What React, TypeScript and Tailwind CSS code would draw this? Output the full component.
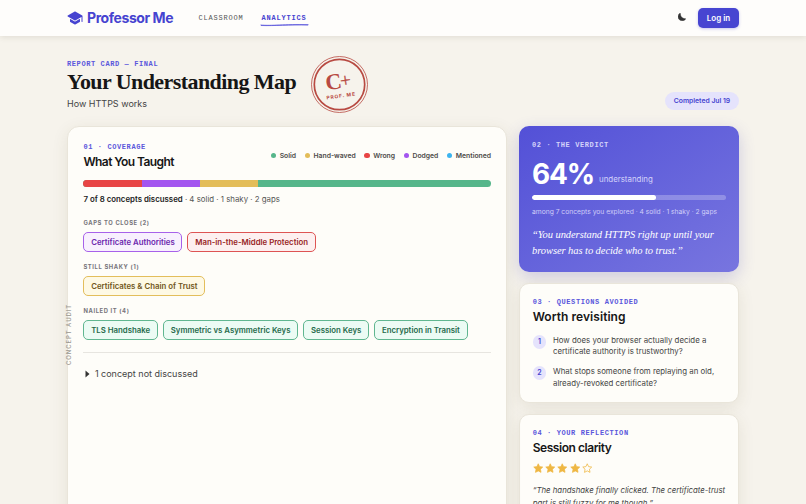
import type { ReactNode } from 'react'
import { IoSchool } from 'react-icons/io5'

const LEGEND = [
  { label: 'Solid', dot: 'bg-[#56b68b]' },
  { label: 'Hand-waved', dot: 'bg-[#e3bd59]' },
  { label: 'Wrong', dot: 'bg-[#e84545]' },
  { label: 'Dodged', dot: 'bg-[#a355ef]' },
  { label: 'Mentioned', dot: 'bg-[#3db4ef]' },
]

const GROUPS = [
  {
    title: 'GAPS TO CLOSE (2)',
    chips: [
      { label: 'Certificate Authorities', tone: 'border-[#a761ea] bg-[#f8f0fe] text-[#6b26ad]' },
      { label: 'Man-in-the-Middle Protection', tone: 'border-[#de5454] bg-[#fdf0f0] text-[#981f25]' },
    ],
  },
  {
    title: 'STILL SHAKY (1)',
    chips: [{ label: 'Certificates & Chain of Trust', tone: 'border-[#e3be5c] bg-[#fef9e5] text-[#71571b]' }],
  },
  {
    title: 'NAILED IT (4)',
    chips: [
      { label: 'TLS Handshake', tone: 'border-[#60b690] bg-[#ecfbf4] text-[#256a4b]' },
      { label: 'Symmetric vs Asymmetric Keys', tone: 'border-[#60b690] bg-[#ecfbf4] text-[#256a4b]' },
      { label: 'Session Keys', tone: 'border-[#60b690] bg-[#ecfbf4] text-[#256a4b]' },
      { label: 'Encryption in Transit', tone: 'border-[#60b690] bg-[#ecfbf4] text-[#256a4b]' },
    ],
  },
]

const QUESTIONS = [
  ['How does your browser actually decide a', 'certificate authority is trustworthy?'],
  ['What stops someone from replaying an old,', 'already-revoked certificate?'],
]

const STAR = 'M12 1.8l3.1 6.5 7.1 1-5.2 5 1.3 7.1L12 18l-6.3 3.4L7 14.3l-5.2-5 7.1-1z'

function Eyebrow({ children }: { children: ReactNode }) {
  return (
    <p className="h-[10px] font-['Liberation_Mono'] text-[7px] leading-[10px] font-bold tracking-[0.6px] whitespace-pre text-[#5a57dc]">
      {children}
    </p>
  )
}

function CardTitle({ children, tracking }: { children: ReactNode; tracking: string }) {
  return (
    <h2 className={`h-[18px] text-[12px] leading-[19px] font-semibold whitespace-nowrap text-[#161616] ${tracking}`}>
      {children}
    </h2>
  )
}

function Header() {
  return (
    <header className="relative z-10 h-[35.5px] bg-[#fefdfb] shadow-[0_1px_6px_rgba(70,60,30,0.13)]">
      <div className="mx-auto flex h-[35px] w-[672px] items-center">
        <IoSchool className="mr-[4px] size-[16px] text-[#4643d0]" />
        <span className="w-[111.5px] text-[14px] leading-[18px] font-bold tracking-[-0.43px] whitespace-nowrap text-[#4643d0]">
          Professor Me
        </span>
        <nav className="flex font-['Liberation_Mono'] text-[7px] leading-[10px] tracking-[0.8px]">
          <span className="w-[63px] text-[#555]">CLASSROOM</span>
          <span className="relative font-bold text-[#4643d0]">
            ANALYTICS
            <svg className="absolute top-[10px] left-[-2px]" width="49" height="4" viewBox="0 0 49 4" fill="none">
              <path d="M.5 2C12 3.1 24 1 48.5 1.7M1 2.5C14 3 30 1.6 48 2" stroke="#5a57dc" strokeWidth=".8" />
            </svg>
          </span>
        </nav>
        <svg className="mr-[12px] mb-[2px] ml-auto" width="8" height="8" viewBox="0 0 24 24" fill="#333">
          <path d="M5 1A12.5 12.5 0 1 0 23.5 17C15 18 6.500 11 7.500 1.500Z" stroke="#333" strokeWidth="1.2" />
        </svg>
        <button className="h-[20px] w-[41px] rounded-[5px] bg-[#4745d1] text-[8px] leading-[20px] font-semibold text-white shadow-[0_1px_3px_rgba(70,67,208,0.3)]">
          Log in
        </button>
      </div>
    </header>
  )
}

function GradeStamp() {
  return (
    <svg className="-mt-[1px] ml-[15px]" width="57" height="57" viewBox="0 0 57 57" fill="none">
      <circle cx="28.5" cy="28.5" r="28" stroke="#b84a42" strokeWidth=".8" />
      <circle cx="28.5" cy="28.5" r="25.2" stroke="#b84a42" strokeWidth="1.7" />
      <g transform="rotate(-8 28.5 28.5)" fill="#b84a42" textAnchor="middle">
        <text x="23" y="32.5" fontFamily="Liberation Serif" fontSize="22.5" fontWeight="700">
          C
        </text>
        <text x="35" y="31.5" fontFamily="Liberation Serif" fontSize="19" stroke="#b84a42" strokeWidth=".3">
          +
        </text>
        <text x="28.5" y="41.7" fontFamily="Inter" fontSize="4.9" fontWeight="700" letterSpacing=".8">
          PROF. ME
        </text>
      </g>
    </svg>
  )
}

function Coverage() {
  return (
    <section className="relative h-[420px] w-[440px] rounded-[12px] border border-[#e9e5da] bg-[#fefdf9] pt-[15px] pr-[15px] pl-[15.4px] shadow-[0_4px_16px_rgba(90,75,35,0.1)]">
      <span className="absolute top-[174px] left-[-4px] h-[64px] w-[10px] rotate-180 text-[6px] leading-[10px] font-medium tracking-[0.9px] whitespace-nowrap text-[#99978f] [writing-mode:vertical-rl]">
        CONCEPT AUDIT
      </span>
      <div className="flex justify-between">
        <div>
          <Eyebrow>01 · COVERAGE</Eyebrow>
          <CardTitle tracking="tracking-[-0.57px]">What You Taught</CardTitle>
        </div>
        <ul className="mt-[8.5px] flex h-[10px] gap-[8.5px] text-[6.8px] leading-[10px] font-semibold text-[#4c4a48]">
          {LEGEND.map(({ label, dot }) => (
            <li key={label} className="flex items-center gap-[3.5px]">
              <span className={`size-[5.5px] rounded-full ${dot}`} />
              {label}
            </li>
          ))}
        </ul>
      </div>
      <div className="mt-[10.3px] flex h-[7px] overflow-hidden rounded-full bg-[#56b68b]">
        <span className="w-[58.3px] bg-[#e84545]" />
        <span className="w-[58.3px] bg-[#a355ef]" />
        <span className="w-[58.3px] bg-[#e3bd59]" />
      </div>
      <p className="mt-[5.7px] h-[12px] text-[7.85px] leading-[12px] text-[#555]">
        <b className="font-semibold text-[#222]">7 of 8 concepts discussed</b> · 4 solid · 1 shaky · 2 gaps
      </p>
      <div className="mt-[12.6px] flex flex-col gap-[10px]">
        {GROUPS.map(({ title, chips }) => (
          <div key={title} className="h-[34px]">
            <h3 className="h-[10px] text-[5.8px] leading-[10px] font-bold tracking-[0.63px] text-[#77757b]">{title}</h3>
            <div className="mt-[4px] flex gap-[5px]">
              {chips.map(({ label, tone }) => (
                <span
                  key={label}
                  className={`h-[20px] rounded-[5px] border px-[6.8px] text-[7.8px] leading-[18px] font-semibold whitespace-nowrap ${tone}`}
                >
                  {label}
                </span>
              ))}
            </div>
          </div>
        ))}
      </div>
      <div className="mt-[12.8px] flex h-[42px] items-center border-t border-[#e7e5e0] pl-[2px] text-[9px] text-[#444]">
        <svg className="mr-[4.5px]" width="5" height="8" viewBox="0 0 5 8">
          <path d="M.5.5 4.5 4 .5 7.5Z" fill="#333" />
        </svg>
        1 concept not discussed
      </div>
    </section>
  )
}

function Verdict() {
  return (
    <section className="h-[146px] rounded-[10px] bg-linear-to-br from-[#5350d7] to-[#7875df] px-[13px] pt-[13.5px] text-white shadow-[0_5px_16px_rgba(80,75,180,0.24)]">
      <p className="font-['Liberation_Mono'] text-[7px] leading-[10px] font-bold tracking-[0.6px] text-[#d4d3fa]">
        02 · THE VERDICT
      </p>
      <div className="mt-[8.5px] flex h-[32px] items-end gap-[5px]">
        <span className="text-[28px] leading-[32px] font-bold tracking-[-1.2px]">64%</span>
        <span className="pb-[6px] text-[7.9px] leading-[10px] text-[#d4d3fa]">understanding</span>
      </div>
      <div className="mt-[5px] h-[5px] overflow-hidden rounded-full bg-white/25">
        <div className="h-full w-[64%] rounded-full bg-white" />
      </div>
      <p className="mt-[6.5px] text-[6.72px] leading-[10px] whitespace-nowrap text-[#cfcdf8]">
        among 7 concepts you explored · 4 solid · 1 shaky · 2 gaps
      </p>
      <blockquote className="mt-[10.5px] font-['Liberation_Serif'] text-[10.5px] leading-[16px] tracking-[-0.07px] whitespace-nowrap italic">
        “You understand HTTPS right up until your
        <br />
        browser has to decide who to trust.”
      </blockquote>
    </section>
  )
}

function Questions() {
  return (
    <section className="h-[120px] rounded-[10px] border border-[#e9e5da] bg-[#fefdf9] px-[12.7px] pt-[13px] shadow-[0_4px_16px_rgba(90,75,35,0.1)]">
      <Eyebrow>03 · QUESTIONS AVOIDED</Eyebrow>
      <CardTitle tracking="tracking-[0.05px]">Worth revisiting</CardTitle>
      <ol className="mt-[10px] flex flex-col gap-[9px] text-[7.85px] leading-[11.2px] text-[#444]">
        {QUESTIONS.map(([first, second], i) => (
          <li key={first} className="flex whitespace-nowrap">
            <span className="mr-[6.8px] size-[13.5px] rounded-full bg-[#e5e3fc] text-center text-[7px] leading-[13.5px] font-semibold text-[#4643d0]">
              {i + 1}
            </span>
            <span>
              {first}
              <br />
              {second}
            </span>
          </li>
        ))}
      </ol>
    </section>
  )
}

function Reflection() {
  return (
    <section className="h-[120px] rounded-[10px] border border-[#e9e5da] bg-[#fefdf9] px-[12.7px] pt-[13px] shadow-[0_4px_16px_rgba(90,75,35,0.1)]">
      <Eyebrow>04 · YOUR REFLECTION</Eyebrow>
      <CardTitle tracking="tracking-[-0.45px]">Session clarity</CardTitle>
      <div className="mt-[6.5px] flex gap-[1.8px]">
        {[1, 2, 3, 4, 5].map((n) => (
          <svg key={n} width="10.5" height="10.5" viewBox="0 0 24 24">
            <path d={STAR} fill={n < 5 ? '#efb743' : 'none'} stroke="#efb743" strokeWidth="1.8" strokeLinejoin="round" />
          </svg>
        ))}
      </div>
      <p className="mt-[10.5px] text-[7.8px] leading-[13px] whitespace-nowrap text-[#444] italic">
        “The handshake finally clicked. The certificate-trust
        <br />
        part is still fuzzy for me though.”
      </p>
    </section>
  )
}

export default function App() {
  return (
    <div className="h-[504px] w-[806px] overflow-hidden bg-[#f6f3ec] font-['Inter',sans-serif]">
      <Header />
      <main className="mx-auto w-[672px]">
        <div className="flex h-[90.5px] pt-[21px]">
          <div className="w-[229px] pt-[2px]">
            <Eyebrow>REPORT CARD — FINAL</Eyebrow>
            <h1 className="h-[26px] font-['Liberation_Serif'] text-[22px] leading-[25px] font-bold tracking-[-0.57px] whitespace-nowrap text-[#161616]">
              Your Understanding Map
            </h1>
            <p className="mt-[3px] text-[9px] leading-[12px] text-[#444]">How HTTPS works</p>
          </div>
          <GradeStamp />
          <span className="mt-[35.5px] ml-auto h-[18px] w-[74px] rounded-full bg-[#e5e3fc] text-center text-[6.8px] leading-[18px] font-semibold text-[#4643d0]">
            Completed Jul 19
          </span>
        </div>
        <div className="flex gap-[12px]">
          <Coverage />
          <div className="flex w-[220px] flex-col gap-[11px]">
            <Verdict />
            <Questions />
            <Reflection />
          </div>
        </div>
      </main>
    </div>
  )
}
